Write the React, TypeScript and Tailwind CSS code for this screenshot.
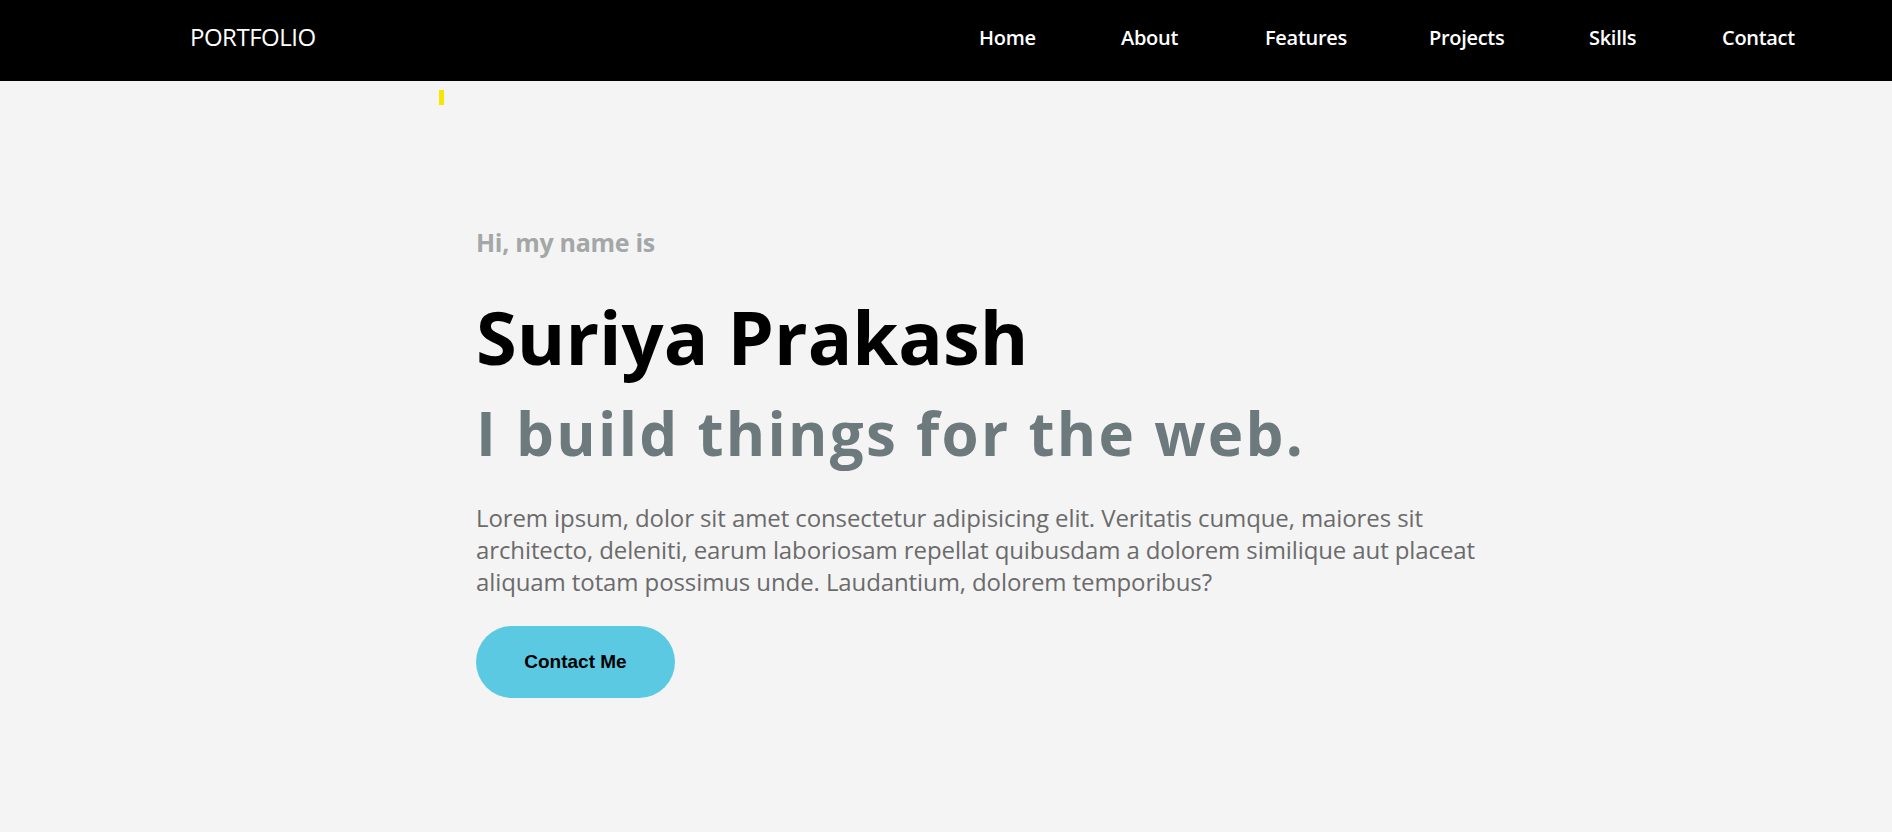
import React from "react";

const navItems = [
  { label: "Home", w: "w-[142px]" },
  { label: "About", w: "w-[144px]" },
  { label: "Features", w: "w-[164px]" },
  { label: "Projects", w: "w-[160px]" },
  { label: "Skills", w: "w-[133px]" },
  { label: "Contact", w: "w-[100px]" },
];

export default function App() {
  return (
    <div className="min-h-[832px] bg-[#f4f4f4] font-['Open_Sans',sans-serif]">
      <nav className="flex h-[81px] bg-black text-white">
        <div className="ml-[190px] mt-[25px] text-[24px] leading-none font-normal tracking-[-0.5px]">
          PORTFOLIO
        </div>
        <ul className="ml-auto mr-[70px] flex pl-0">
          {navItems.map((n) => (
            <li key={n.label} className={`${n.w} mt-[28px] text-[20px] leading-none font-semibold tracking-[-0.3px]`}>
              {n.label}
            </li>
          ))}
        </ul>
      </nav>
      <main className="flex flex-col">
        <div className="ml-[439px] mt-[9px] h-[15px] w-[5px] bg-[#f6e600]" />
        <div className="ml-[476px] mt-[125px] flex flex-col">
          <p className="text-[25px] leading-none font-bold tracking-[-0.3px] text-[#a4a7a8]">Hi, my name is</p>
          <h1 className="mt-[45px] text-[74px] leading-none font-bold text-black">Suriya Prakash</h1>
          <h2 className="mt-[29px] text-[60px] leading-none font-bold tracking-[2.3px] text-[#6c797d]">I build things for the web.</h2>
          <p className="mt-[39px] max-w-[1012px] text-[24px] leading-[32px] tracking-[-0.1px] text-[#6b6b6b]">
            Lorem ipsum, dolor sit amet consectetur adipisicing elit. Veritatis cumque, maiores sit architecto, deleniti, earum laboriosam repellat quibusdam a dolorem similique aut placeat aliquam totam possimus unde. Laudantium, dolorem temporibus?
          </p>
          <div className="mt-[28px]">
            <button className="h-[72px] w-[199px] rounded-full bg-[#5bc9e1] font-['Liberation_Sans',Arial,sans-serif] text-[19px] font-bold text-black">
              Contact Me
            </button>
          </div>
        </div>
      </main>
    </div>
  );
}
